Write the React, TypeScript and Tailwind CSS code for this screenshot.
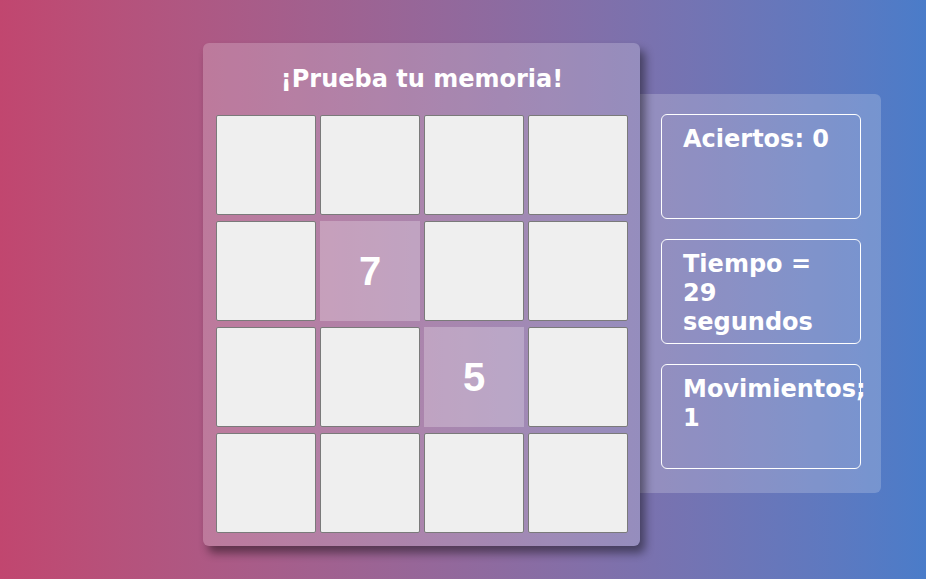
import React from "react";

const cells: (string | null)[] = [
  null, null, null, null,
  null, "7", null, null,
  null, null, "5", null,
  null, null, null, null,
];

function Cell({ value }: { value: string | null }) {
  if (value) {
    return (
      <div className="w-[100px] h-[100px] bg-white/25 flex items-center justify-center text-white font-bold text-[40px] font-['Liberation_Sans',Arial,sans-serif]">
        {value}
      </div>
    );
  }
  return <div className="w-[100px] h-[100px] bg-[#efefef] border border-[#7a7a7a] rounded-[2px]" />;
}

function Stat({ children }: { children: React.ReactNode }) {
  return (
    <div className="w-[200px] h-[105px] border border-white rounded-md pl-[21px] pr-[21px] pt-[10px] text-white font-bold text-[24px] leading-[29px] whitespace-normal">
      {children}
    </div>
  );
}

export default function App() {
  return (
    <div className="min-h-screen w-full h-[579px] overflow-hidden bg-gradient-to-r from-[#c1466f] to-[#4a7cc9] font-['DejaVu_Sans',sans-serif]">
      <div className="flex items-start pl-[203px] pt-[43px]">
        <div className="relative z-10 w-[437px] h-[503px] rounded-md bg-white/20 shadow-[5px_7px_10px_rgba(0,0,0,0.45)] pl-[13px] pr-[12px]">
          <h1 className="h-[72px] flex items-center justify-center text-white font-bold text-[24px]">
            ¡Prueba tu memoria!
          </h1>
          <div className="grid grid-cols-[repeat(4,100px)] gap-x-[4px] gap-y-[6px]">
            {cells.map((c, i) => (
              <Cell key={i} value={c} />
            ))}
          </div>
        </div>
        <div className="mt-[51px] w-[241px] h-[399px] rounded-r-md bg-white/20 pl-[21px] pt-[20px] flex flex-col gap-[20px]">
          <Stat>Aciertos: 0</Stat>
          <Stat>Tiempo = 29 segundos</Stat>
          <Stat>
            <span className="whitespace-nowrap">Movimientos;</span> 1
          </Stat>
        </div>
      </div>
    </div>
  );
}
